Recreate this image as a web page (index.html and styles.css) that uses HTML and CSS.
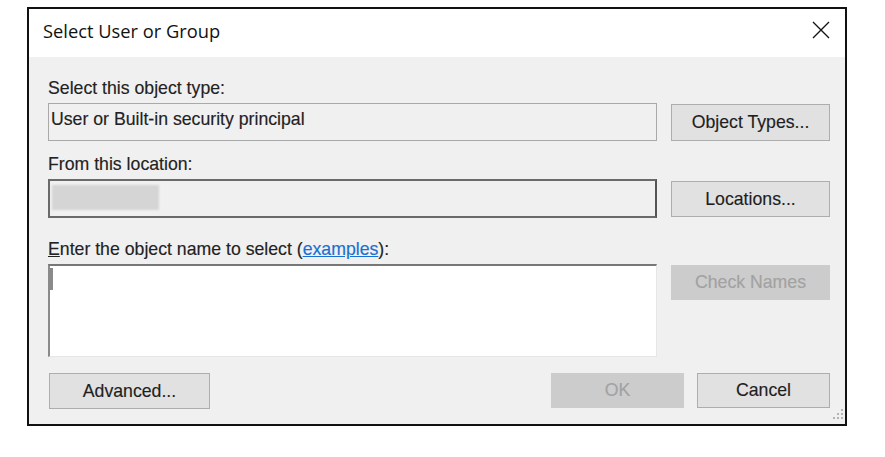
FILE: index.html
```html
<!DOCTYPE html>
<html lang="en">
<head>
<meta charset="utf-8">
<title>Select User or Group</title>
<link rel="stylesheet" href="styles.css">
</head>
<body>
<div class="dialog">
  <div class="titlebar">
    <div class="title">Select User or Group</div>
    <svg class="close" width="18" height="18" viewBox="0 0 18 18" aria-hidden="true">
      <path d="M1 1 L17 17 M17 1 L1 17" stroke="#111" stroke-width="1.3" fill="none"/>
    </svg>
  </div>
  <div class="content">
    <div class="row">
      <div class="main">
        <div class="label">Select this object type:</div>
        <div class="field field-light">User or Built-in security principal</div>
      </div>
      <div class="side side-end">
        <button class="btn btn-h37">Object Types...</button>
      </div>
    </div>
    <div class="row row-gap13">
      <div class="main">
        <div class="label">From this location:</div>
        <div class="field field-dark"><span class="blurred"></span></div>
      </div>
      <div class="side side-end">
        <button class="btn btn-h36 btn-mb1">Locations...</button>
      </div>
    </div>
    <div class="row row-gap21 row-start">
      <div class="main">
        <div class="label"><u>E</u>nter the object name to select (<a class="link" href="#">examples</a>):</div>
        <div class="textarea"><span class="caret"></span></div>
      </div>
      <div class="side side-top26">
        <button class="btn btn-h35 btn-disabled">Check Names</button>
      </div>
    </div>
    <div class="footer">
      <button class="btn btn-adv">Advanced...</button>
      <div class="footer-right">
        <button class="btn btn-ok btn-disabled">OK</button>
        <button class="btn btn-ok">Cancel</button>
      </div>
    </div>
  </div>
  <svg class="grip" width="14" height="16" viewBox="0 0 14 16" aria-hidden="true">
    <rect x="10" y="2" width="2" height="2" fill="#b4b4b4"/>
    <rect x="10" y="6" width="2" height="2" fill="#b4b4b4"/>
    <rect x="6" y="6" width="2" height="2" fill="#b4b4b4"/>
    <rect x="10" y="10" width="2" height="2" fill="#b4b4b4"/>
    <rect x="6" y="10" width="2" height="2" fill="#b4b4b4"/>
    <rect x="2" y="10" width="2" height="2" fill="#b4b4b4"/>
  </svg>
</div>
</body>
</html>
```
FILE: styles.css
```css
* { box-sizing: border-box; }
html, body { margin: 0; padding: 0; background: #ffffff; }
body { font-family: "Liberation Sans", Arial, sans-serif; }

.dialog {
  position: relative;
  margin: 7px 0 0 27px;
  width: 820px;
  height: 419px;
  border: 2px solid #111;
  background: #f0f0f0;
  display: flex;
  flex-direction: column;
}

.titlebar {
  height: 48px;
  background: #ffffff;
  display: flex;
  justify-content: space-between;
  align-items: flex-start;
  padding: 10px 15px 0 14px;
}
.title {
  font-family: "Open Sans", "Noto Sans", sans-serif;
  font-size: 18.3px;
  line-height: 24px;
  color: #111;
}
.close { margin-top: 2px; }

.content {
  flex: 1;
  padding: 21px 15px 15px 19px;
  display: flex;
  flex-direction: column;
}

.row {
  display: flex;
  gap: 14px;
  align-items: stretch;
}
.row-gap13 { margin-top: 13px; }
.row-gap21 { margin-top: 21px; }
.row-start { align-items: flex-start; }

.main {
  width: 609px;
  display: flex;
  flex-direction: column;
}
.side {
  width: 159px;
  display: flex;
  flex-direction: column;
}
.side-end { justify-content: flex-end; }
.side-top26 { padding-top: 26px; }

.label {
  font-size: 17.7px;
  line-height: 20px;
  height: 20px;
  color: #222;
  white-space: nowrap;
  margin-bottom: 5px;
  -webkit-text-stroke: 0.15px #222;
}
.link { color: #1a6fd0; text-decoration: underline; -webkit-text-stroke: 0.15px #1a6fd0; }

.field {
  height: 38px;
  font-size: 17.7px;
  line-height: 20px;
  color: #222;
  padding: 5px 0 0 2px;
  white-space: nowrap;
  -webkit-text-stroke: 0.15px #222;
}
.field-light { border: 1px solid #a9a9a9; }
.field-dark {
  height: 39px;
  border: 2px solid #6a6a6a;
  border-right-color: #555;
  padding: 4px 0 0 2px;
}
.blurred {
  display: block;
  width: 107px;
  height: 25px;
  background: #d5d5d5;
  filter: blur(1.2px);
}

.textarea {
  position: relative;
  height: 93px;
  background: #ffffff;
  border-top: 2px solid #777;
  border-left: 2px solid #8a8a8a;
  border-right: 1px solid #e6e6e6;
  border-bottom: 1px solid #e6e6e6;
}
.caret {
  display: block;
  width: 3px;
  height: 22px;
  margin-top: 2px;
  background: #8a8a8a;
}

.btn {
  font-family: "Liberation Sans", Arial, sans-serif;
  font-size: 17.7px;
  color: #1e1e1e;
  background: #e1e1e1;
  border: 1px solid #adadad;
  padding: 0;
  margin: 0;
  width: 159px;
  -webkit-text-stroke: 0.15px #1e1e1e;
}
.btn-h37 { height: 37px; }
.btn-h36 { height: 36px; }
.btn-h35 { height: 35px; }
.btn-mb1 { margin-bottom: 1px; }
.btn-disabled {
  background: #cccccc;
  border-color: #cccccc;
  color: #a2a2a2;
  -webkit-text-stroke: 0.15px #a2a2a2;
}

.footer {
  margin-top: 16px;
  display: flex;
  justify-content: space-between;
  padding-left: 1px;
}
.btn-adv { width: 161px; height: 36px; }
.footer-right { display: flex; gap: 13px; }
.btn-ok { width: 133px; height: 35px; }

.grip {
  position: absolute;
  right: 0;
  bottom: 1px;
}
```
